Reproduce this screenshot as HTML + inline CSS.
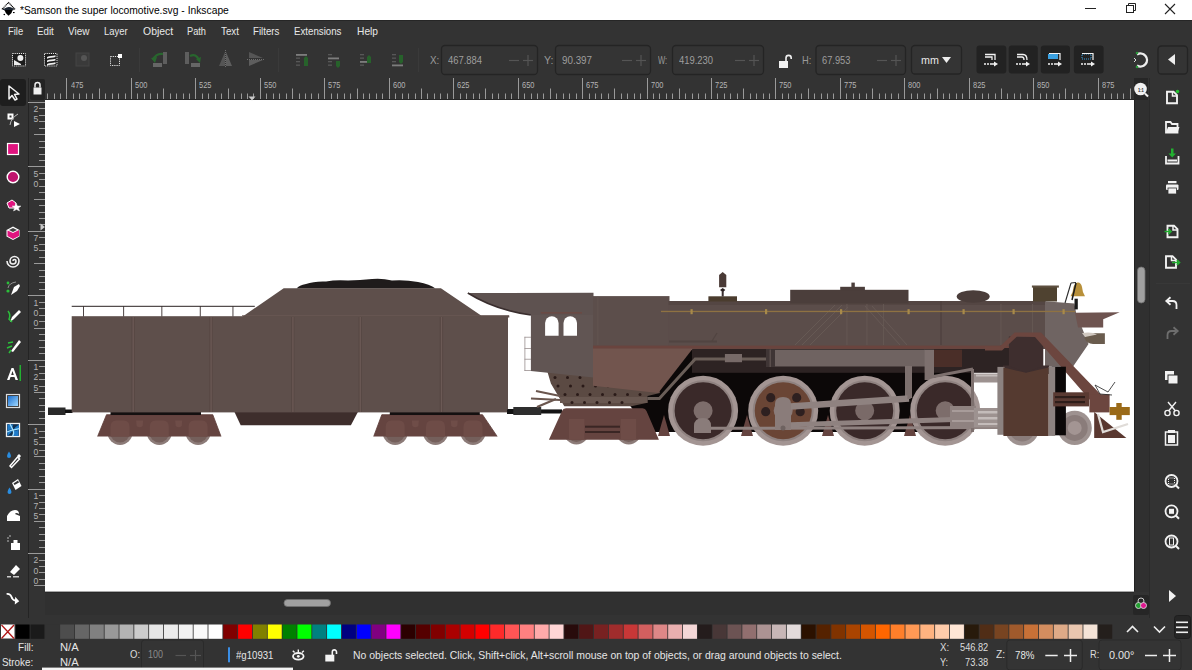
<!DOCTYPE html><html><head><meta charset="utf-8"><style>
*{margin:0;padding:0;box-sizing:border-box}
html,body{width:1192px;height:670px;overflow:hidden;background:#333333;font-family:"Liberation Sans",sans-serif;color:#e6e6e6}
.abs{position:absolute}
.t{position:absolute;white-space:nowrap;line-height:1;transform-origin:0 0}
svg{position:absolute;left:0;top:0}
</style></head><body>

<svg width="1192" height="670"><rect x="0" y="0" width="1192" height="20" fill="#fff" rx="0" /><path d="M8.5 2.5 L14.6 8.9 L8.5 11.5 L2.4 8.9Z" fill="#fff" stroke="#000" stroke-width="1.1" stroke-dasharray="1.2 0.5"/><path d="M4.5 8.5 Q8.5 5.5 12.8 8.3 L14.6 8.9 L8.5 11.5 L2.4 8.9Z" fill="#1a2430"/><path d="M4.5 10 H12.5 L11.5 13 L8.5 15.8 L5.8 13Z" fill="#000"/><circle cx="4.3" cy="14.5" r="0.8" fill="#000"/><rect x="13" y="12" width="1.6" height="1.1" fill="#000"/><line x1="1085" y1="8.5" x2="1096" y2="8.5" stroke="#222" stroke-width="1"/><rect x="1126.5" y="5.5" width="7" height="7" fill="none" stroke="#222"/><path d="M1128.5 5.5 V3.5 H1135.5 V10.5 H1133.5" fill="none" stroke="#222"/><path d="M1165 4 L1175 14 M1175 4 L1165 14" stroke="#222" stroke-width="1.1"/><rect x="0" y="20" width="1192" height="1" fill="#262626" rx="0" /><rect x="45" y="100" width="1089" height="492" fill="#fff" rx="0" /><rect x="45" y="592" width="1089" height="23" fill="#303030" rx="0" /><rect x="45" y="591.6" width="1089" height="1" fill="#242424" rx="0" /><rect x="1134" y="78" width="14" height="22" fill="#262626" rx="0" /><rect x="28" y="78" width="1" height="540" fill="#242424" rx="0" /><rect x="1134" y="100" width="15" height="492" fill="#303030" rx="0" /><rect x="1149" y="78" width="1" height="540" fill="#2a2a2a" rx="0" /><rect x="1134" y="100" width="1" height="491" fill="#222" rx="0" /><rect x="0" y="79" width="26" height="27" fill="#1e1e1e" rx="3" /><rect x="30" y="79" width="15" height="21" fill="#232323" rx="2" /><rect x="33.5" y="87.5" width="8" height="7" fill="#eee"/><path d="M35 87.5 V85 a2.5 2.5 0 0 1 5 0 V87.5" fill="none" stroke="#eee" stroke-width="1.5"/><line x1="47.5" y1="93.5" x2="47.5" y2="100" stroke="#9a9a9a" stroke-width="1"/><line x1="54.5" y1="93.5" x2="54.5" y2="100" stroke="#9a9a9a" stroke-width="1"/><line x1="60.5" y1="93.5" x2="60.5" y2="100" stroke="#9a9a9a" stroke-width="1"/><line x1="66.5" y1="78" x2="66.5" y2="100" stroke="#9a9a9a" stroke-width="1"/><line x1="73.5" y1="93.5" x2="73.5" y2="100" stroke="#9a9a9a" stroke-width="1"/><line x1="79.5" y1="93.5" x2="79.5" y2="100" stroke="#9a9a9a" stroke-width="1"/><line x1="86.5" y1="93.5" x2="86.5" y2="100" stroke="#9a9a9a" stroke-width="1"/><line x1="92.5" y1="93.5" x2="92.5" y2="100" stroke="#9a9a9a" stroke-width="1"/><line x1="99.5" y1="88.5" x2="99.5" y2="100" stroke="#9a9a9a" stroke-width="1"/><line x1="105.5" y1="93.5" x2="105.5" y2="100" stroke="#9a9a9a" stroke-width="1"/><line x1="112.5" y1="93.5" x2="112.5" y2="100" stroke="#9a9a9a" stroke-width="1"/><line x1="118.5" y1="93.5" x2="118.5" y2="100" stroke="#9a9a9a" stroke-width="1"/><line x1="125.5" y1="93.5" x2="125.5" y2="100" stroke="#9a9a9a" stroke-width="1"/><line x1="131.5" y1="78" x2="131.5" y2="100" stroke="#9a9a9a" stroke-width="1"/><line x1="137.5" y1="93.5" x2="137.5" y2="100" stroke="#9a9a9a" stroke-width="1"/><line x1="144.5" y1="93.5" x2="144.5" y2="100" stroke="#9a9a9a" stroke-width="1"/><line x1="150.5" y1="93.5" x2="150.5" y2="100" stroke="#9a9a9a" stroke-width="1"/><line x1="157.5" y1="93.5" x2="157.5" y2="100" stroke="#9a9a9a" stroke-width="1"/><line x1="163.5" y1="88.5" x2="163.5" y2="100" stroke="#9a9a9a" stroke-width="1"/><line x1="170.5" y1="93.5" x2="170.5" y2="100" stroke="#9a9a9a" stroke-width="1"/><line x1="176.5" y1="93.5" x2="176.5" y2="100" stroke="#9a9a9a" stroke-width="1"/><line x1="183.5" y1="93.5" x2="183.5" y2="100" stroke="#9a9a9a" stroke-width="1"/><line x1="189.5" y1="93.5" x2="189.5" y2="100" stroke="#9a9a9a" stroke-width="1"/><line x1="195.5" y1="78" x2="195.5" y2="100" stroke="#9a9a9a" stroke-width="1"/><line x1="202.5" y1="93.5" x2="202.5" y2="100" stroke="#9a9a9a" stroke-width="1"/><line x1="208.5" y1="93.5" x2="208.5" y2="100" stroke="#9a9a9a" stroke-width="1"/><line x1="215.5" y1="93.5" x2="215.5" y2="100" stroke="#9a9a9a" stroke-width="1"/><line x1="221.5" y1="93.5" x2="221.5" y2="100" stroke="#9a9a9a" stroke-width="1"/><line x1="228.5" y1="88.5" x2="228.5" y2="100" stroke="#9a9a9a" stroke-width="1"/><line x1="234.5" y1="93.5" x2="234.5" y2="100" stroke="#9a9a9a" stroke-width="1"/><line x1="241.5" y1="93.5" x2="241.5" y2="100" stroke="#9a9a9a" stroke-width="1"/><line x1="247.5" y1="93.5" x2="247.5" y2="100" stroke="#9a9a9a" stroke-width="1"/><line x1="253.5" y1="93.5" x2="253.5" y2="100" stroke="#9a9a9a" stroke-width="1"/><line x1="260.5" y1="78" x2="260.5" y2="100" stroke="#9a9a9a" stroke-width="1"/><line x1="266.5" y1="93.5" x2="266.5" y2="100" stroke="#9a9a9a" stroke-width="1"/><line x1="273.5" y1="93.5" x2="273.5" y2="100" stroke="#9a9a9a" stroke-width="1"/><line x1="279.5" y1="93.5" x2="279.5" y2="100" stroke="#9a9a9a" stroke-width="1"/><line x1="286.5" y1="93.5" x2="286.5" y2="100" stroke="#9a9a9a" stroke-width="1"/><line x1="292.5" y1="88.5" x2="292.5" y2="100" stroke="#9a9a9a" stroke-width="1"/><line x1="299.5" y1="93.5" x2="299.5" y2="100" stroke="#9a9a9a" stroke-width="1"/><line x1="305.5" y1="93.5" x2="305.5" y2="100" stroke="#9a9a9a" stroke-width="1"/><line x1="311.5" y1="93.5" x2="311.5" y2="100" stroke="#9a9a9a" stroke-width="1"/><line x1="318.5" y1="93.5" x2="318.5" y2="100" stroke="#9a9a9a" stroke-width="1"/><line x1="324.5" y1="78" x2="324.5" y2="100" stroke="#9a9a9a" stroke-width="1"/><line x1="331.5" y1="93.5" x2="331.5" y2="100" stroke="#9a9a9a" stroke-width="1"/><line x1="337.5" y1="93.5" x2="337.5" y2="100" stroke="#9a9a9a" stroke-width="1"/><line x1="344.5" y1="93.5" x2="344.5" y2="100" stroke="#9a9a9a" stroke-width="1"/><line x1="350.5" y1="93.5" x2="350.5" y2="100" stroke="#9a9a9a" stroke-width="1"/><line x1="357.5" y1="88.5" x2="357.5" y2="100" stroke="#9a9a9a" stroke-width="1"/><line x1="363.5" y1="93.5" x2="363.5" y2="100" stroke="#9a9a9a" stroke-width="1"/><line x1="369.5" y1="93.5" x2="369.5" y2="100" stroke="#9a9a9a" stroke-width="1"/><line x1="376.5" y1="93.5" x2="376.5" y2="100" stroke="#9a9a9a" stroke-width="1"/><line x1="382.5" y1="93.5" x2="382.5" y2="100" stroke="#9a9a9a" stroke-width="1"/><line x1="389.5" y1="78" x2="389.5" y2="100" stroke="#9a9a9a" stroke-width="1"/><line x1="395.5" y1="93.5" x2="395.5" y2="100" stroke="#9a9a9a" stroke-width="1"/><line x1="402.5" y1="93.5" x2="402.5" y2="100" stroke="#9a9a9a" stroke-width="1"/><line x1="408.5" y1="93.5" x2="408.5" y2="100" stroke="#9a9a9a" stroke-width="1"/><line x1="415.5" y1="93.5" x2="415.5" y2="100" stroke="#9a9a9a" stroke-width="1"/><line x1="421.5" y1="88.5" x2="421.5" y2="100" stroke="#9a9a9a" stroke-width="1"/><line x1="427.5" y1="93.5" x2="427.5" y2="100" stroke="#9a9a9a" stroke-width="1"/><line x1="434.5" y1="93.5" x2="434.5" y2="100" stroke="#9a9a9a" stroke-width="1"/><line x1="440.5" y1="93.5" x2="440.5" y2="100" stroke="#9a9a9a" stroke-width="1"/><line x1="447.5" y1="93.5" x2="447.5" y2="100" stroke="#9a9a9a" stroke-width="1"/><line x1="453.5" y1="78" x2="453.5" y2="100" stroke="#9a9a9a" stroke-width="1"/><line x1="460.5" y1="93.5" x2="460.5" y2="100" stroke="#9a9a9a" stroke-width="1"/><line x1="466.5" y1="93.5" x2="466.5" y2="100" stroke="#9a9a9a" stroke-width="1"/><line x1="473.5" y1="93.5" x2="473.5" y2="100" stroke="#9a9a9a" stroke-width="1"/><line x1="479.5" y1="93.5" x2="479.5" y2="100" stroke="#9a9a9a" stroke-width="1"/><line x1="485.5" y1="88.5" x2="485.5" y2="100" stroke="#9a9a9a" stroke-width="1"/><line x1="492.5" y1="93.5" x2="492.5" y2="100" stroke="#9a9a9a" stroke-width="1"/><line x1="498.5" y1="93.5" x2="498.5" y2="100" stroke="#9a9a9a" stroke-width="1"/><line x1="505.5" y1="93.5" x2="505.5" y2="100" stroke="#9a9a9a" stroke-width="1"/><line x1="511.5" y1="93.5" x2="511.5" y2="100" stroke="#9a9a9a" stroke-width="1"/><line x1="518.5" y1="78" x2="518.5" y2="100" stroke="#9a9a9a" stroke-width="1"/><line x1="524.5" y1="93.5" x2="524.5" y2="100" stroke="#9a9a9a" stroke-width="1"/><line x1="531.5" y1="93.5" x2="531.5" y2="100" stroke="#9a9a9a" stroke-width="1"/><line x1="537.5" y1="93.5" x2="537.5" y2="100" stroke="#9a9a9a" stroke-width="1"/><line x1="543.5" y1="93.5" x2="543.5" y2="100" stroke="#9a9a9a" stroke-width="1"/><line x1="550.5" y1="88.5" x2="550.5" y2="100" stroke="#9a9a9a" stroke-width="1"/><line x1="556.5" y1="93.5" x2="556.5" y2="100" stroke="#9a9a9a" stroke-width="1"/><line x1="563.5" y1="93.5" x2="563.5" y2="100" stroke="#9a9a9a" stroke-width="1"/><line x1="569.5" y1="93.5" x2="569.5" y2="100" stroke="#9a9a9a" stroke-width="1"/><line x1="576.5" y1="93.5" x2="576.5" y2="100" stroke="#9a9a9a" stroke-width="1"/><line x1="582.5" y1="78" x2="582.5" y2="100" stroke="#9a9a9a" stroke-width="1"/><line x1="589.5" y1="93.5" x2="589.5" y2="100" stroke="#9a9a9a" stroke-width="1"/><line x1="595.5" y1="93.5" x2="595.5" y2="100" stroke="#9a9a9a" stroke-width="1"/><line x1="601.5" y1="93.5" x2="601.5" y2="100" stroke="#9a9a9a" stroke-width="1"/><line x1="608.5" y1="93.5" x2="608.5" y2="100" stroke="#9a9a9a" stroke-width="1"/><line x1="614.5" y1="88.5" x2="614.5" y2="100" stroke="#9a9a9a" stroke-width="1"/><line x1="621.5" y1="93.5" x2="621.5" y2="100" stroke="#9a9a9a" stroke-width="1"/><line x1="627.5" y1="93.5" x2="627.5" y2="100" stroke="#9a9a9a" stroke-width="1"/><line x1="634.5" y1="93.5" x2="634.5" y2="100" stroke="#9a9a9a" stroke-width="1"/><line x1="640.5" y1="93.5" x2="640.5" y2="100" stroke="#9a9a9a" stroke-width="1"/><line x1="647.5" y1="78" x2="647.5" y2="100" stroke="#9a9a9a" stroke-width="1"/><line x1="653.5" y1="93.5" x2="653.5" y2="100" stroke="#9a9a9a" stroke-width="1"/><line x1="659.5" y1="93.5" x2="659.5" y2="100" stroke="#9a9a9a" stroke-width="1"/><line x1="666.5" y1="93.5" x2="666.5" y2="100" stroke="#9a9a9a" stroke-width="1"/><line x1="672.5" y1="93.5" x2="672.5" y2="100" stroke="#9a9a9a" stroke-width="1"/><line x1="679.5" y1="88.5" x2="679.5" y2="100" stroke="#9a9a9a" stroke-width="1"/><line x1="685.5" y1="93.5" x2="685.5" y2="100" stroke="#9a9a9a" stroke-width="1"/><line x1="692.5" y1="93.5" x2="692.5" y2="100" stroke="#9a9a9a" stroke-width="1"/><line x1="698.5" y1="93.5" x2="698.5" y2="100" stroke="#9a9a9a" stroke-width="1"/><line x1="705.5" y1="93.5" x2="705.5" y2="100" stroke="#9a9a9a" stroke-width="1"/><line x1="711.5" y1="78" x2="711.5" y2="100" stroke="#9a9a9a" stroke-width="1"/><line x1="717.5" y1="93.5" x2="717.5" y2="100" stroke="#9a9a9a" stroke-width="1"/><line x1="724.5" y1="93.5" x2="724.5" y2="100" stroke="#9a9a9a" stroke-width="1"/><line x1="730.5" y1="93.5" x2="730.5" y2="100" stroke="#9a9a9a" stroke-width="1"/><line x1="737.5" y1="93.5" x2="737.5" y2="100" stroke="#9a9a9a" stroke-width="1"/><line x1="743.5" y1="88.5" x2="743.5" y2="100" stroke="#9a9a9a" stroke-width="1"/><line x1="750.5" y1="93.5" x2="750.5" y2="100" stroke="#9a9a9a" stroke-width="1"/><line x1="756.5" y1="93.5" x2="756.5" y2="100" stroke="#9a9a9a" stroke-width="1"/><line x1="763.5" y1="93.5" x2="763.5" y2="100" stroke="#9a9a9a" stroke-width="1"/><line x1="769.5" y1="93.5" x2="769.5" y2="100" stroke="#9a9a9a" stroke-width="1"/><line x1="775.5" y1="78" x2="775.5" y2="100" stroke="#9a9a9a" stroke-width="1"/><line x1="782.5" y1="93.5" x2="782.5" y2="100" stroke="#9a9a9a" stroke-width="1"/><line x1="788.5" y1="93.5" x2="788.5" y2="100" stroke="#9a9a9a" stroke-width="1"/><line x1="795.5" y1="93.5" x2="795.5" y2="100" stroke="#9a9a9a" stroke-width="1"/><line x1="801.5" y1="93.5" x2="801.5" y2="100" stroke="#9a9a9a" stroke-width="1"/><line x1="808.5" y1="88.5" x2="808.5" y2="100" stroke="#9a9a9a" stroke-width="1"/><line x1="814.5" y1="93.5" x2="814.5" y2="100" stroke="#9a9a9a" stroke-width="1"/><line x1="821.5" y1="93.5" x2="821.5" y2="100" stroke="#9a9a9a" stroke-width="1"/><line x1="827.5" y1="93.5" x2="827.5" y2="100" stroke="#9a9a9a" stroke-width="1"/><line x1="833.5" y1="93.5" x2="833.5" y2="100" stroke="#9a9a9a" stroke-width="1"/><line x1="840.5" y1="78" x2="840.5" y2="100" stroke="#9a9a9a" stroke-width="1"/><line x1="846.5" y1="93.5" x2="846.5" y2="100" stroke="#9a9a9a" stroke-width="1"/><line x1="853.5" y1="93.5" x2="853.5" y2="100" stroke="#9a9a9a" stroke-width="1"/><line x1="859.5" y1="93.5" x2="859.5" y2="100" stroke="#9a9a9a" stroke-width="1"/><line x1="866.5" y1="93.5" x2="866.5" y2="100" stroke="#9a9a9a" stroke-width="1"/><line x1="872.5" y1="88.5" x2="872.5" y2="100" stroke="#9a9a9a" stroke-width="1"/><line x1="879.5" y1="93.5" x2="879.5" y2="100" stroke="#9a9a9a" stroke-width="1"/><line x1="885.5" y1="93.5" x2="885.5" y2="100" stroke="#9a9a9a" stroke-width="1"/><line x1="891.5" y1="93.5" x2="891.5" y2="100" stroke="#9a9a9a" stroke-width="1"/><line x1="898.5" y1="93.5" x2="898.5" y2="100" stroke="#9a9a9a" stroke-width="1"/><line x1="904.5" y1="78" x2="904.5" y2="100" stroke="#9a9a9a" stroke-width="1"/><line x1="911.5" y1="93.5" x2="911.5" y2="100" stroke="#9a9a9a" stroke-width="1"/><line x1="917.5" y1="93.5" x2="917.5" y2="100" stroke="#9a9a9a" stroke-width="1"/><line x1="924.5" y1="93.5" x2="924.5" y2="100" stroke="#9a9a9a" stroke-width="1"/><line x1="930.5" y1="93.5" x2="930.5" y2="100" stroke="#9a9a9a" stroke-width="1"/><line x1="937.5" y1="88.5" x2="937.5" y2="100" stroke="#9a9a9a" stroke-width="1"/><line x1="943.5" y1="93.5" x2="943.5" y2="100" stroke="#9a9a9a" stroke-width="1"/><line x1="949.5" y1="93.5" x2="949.5" y2="100" stroke="#9a9a9a" stroke-width="1"/><line x1="956.5" y1="93.5" x2="956.5" y2="100" stroke="#9a9a9a" stroke-width="1"/><line x1="962.5" y1="93.5" x2="962.5" y2="100" stroke="#9a9a9a" stroke-width="1"/><line x1="969.5" y1="78" x2="969.5" y2="100" stroke="#9a9a9a" stroke-width="1"/><line x1="975.5" y1="93.5" x2="975.5" y2="100" stroke="#9a9a9a" stroke-width="1"/><line x1="982.5" y1="93.5" x2="982.5" y2="100" stroke="#9a9a9a" stroke-width="1"/><line x1="988.5" y1="93.5" x2="988.5" y2="100" stroke="#9a9a9a" stroke-width="1"/><line x1="995.5" y1="93.5" x2="995.5" y2="100" stroke="#9a9a9a" stroke-width="1"/><line x1="1001.5" y1="88.5" x2="1001.5" y2="100" stroke="#9a9a9a" stroke-width="1"/><line x1="1007.5" y1="93.5" x2="1007.5" y2="100" stroke="#9a9a9a" stroke-width="1"/><line x1="1014.5" y1="93.5" x2="1014.5" y2="100" stroke="#9a9a9a" stroke-width="1"/><line x1="1020.5" y1="93.5" x2="1020.5" y2="100" stroke="#9a9a9a" stroke-width="1"/><line x1="1027.5" y1="93.5" x2="1027.5" y2="100" stroke="#9a9a9a" stroke-width="1"/><line x1="1033.5" y1="78" x2="1033.5" y2="100" stroke="#9a9a9a" stroke-width="1"/><line x1="1040.5" y1="93.5" x2="1040.5" y2="100" stroke="#9a9a9a" stroke-width="1"/><line x1="1046.5" y1="93.5" x2="1046.5" y2="100" stroke="#9a9a9a" stroke-width="1"/><line x1="1053.5" y1="93.5" x2="1053.5" y2="100" stroke="#9a9a9a" stroke-width="1"/><line x1="1059.5" y1="93.5" x2="1059.5" y2="100" stroke="#9a9a9a" stroke-width="1"/><line x1="1065.5" y1="88.5" x2="1065.5" y2="100" stroke="#9a9a9a" stroke-width="1"/><line x1="1072.5" y1="93.5" x2="1072.5" y2="100" stroke="#9a9a9a" stroke-width="1"/><line x1="1078.5" y1="93.5" x2="1078.5" y2="100" stroke="#9a9a9a" stroke-width="1"/><line x1="1085.5" y1="93.5" x2="1085.5" y2="100" stroke="#9a9a9a" stroke-width="1"/><line x1="1091.5" y1="93.5" x2="1091.5" y2="100" stroke="#9a9a9a" stroke-width="1"/><line x1="1098.5" y1="78" x2="1098.5" y2="100" stroke="#9a9a9a" stroke-width="1"/><line x1="1104.5" y1="93.5" x2="1104.5" y2="100" stroke="#9a9a9a" stroke-width="1"/><line x1="1111.5" y1="93.5" x2="1111.5" y2="100" stroke="#9a9a9a" stroke-width="1"/><line x1="1117.5" y1="93.5" x2="1117.5" y2="100" stroke="#9a9a9a" stroke-width="1"/><line x1="1123.5" y1="93.5" x2="1123.5" y2="100" stroke="#9a9a9a" stroke-width="1"/><line x1="1130.5" y1="88.5" x2="1130.5" y2="100" stroke="#9a9a9a" stroke-width="1"/><line x1="28" y1="102.5" x2="45" y2="102.5" stroke="#9a9a9a" stroke-width="1"/><line x1="39" y1="108.5" x2="45" y2="108.5" stroke="#9a9a9a" stroke-width="1"/><line x1="39" y1="115.5" x2="45" y2="115.5" stroke="#9a9a9a" stroke-width="1"/><line x1="39" y1="121.5" x2="45" y2="121.5" stroke="#9a9a9a" stroke-width="1"/><line x1="39" y1="128.5" x2="45" y2="128.5" stroke="#9a9a9a" stroke-width="1"/><line x1="34" y1="134.5" x2="45" y2="134.5" stroke="#9a9a9a" stroke-width="1"/><line x1="39" y1="141.5" x2="45" y2="141.5" stroke="#9a9a9a" stroke-width="1"/><line x1="39" y1="147.5" x2="45" y2="147.5" stroke="#9a9a9a" stroke-width="1"/><line x1="39" y1="154.5" x2="45" y2="154.5" stroke="#9a9a9a" stroke-width="1"/><line x1="39" y1="160.5" x2="45" y2="160.5" stroke="#9a9a9a" stroke-width="1"/><text x="36" y="112.1" font-size="8.6" fill="#b4b4b4" text-anchor="middle" font-family="Liberation Sans">2</text><text x="36" y="122.4" font-size="8.6" fill="#b4b4b4" text-anchor="middle" font-family="Liberation Sans">5</text><line x1="28" y1="166.5" x2="45" y2="166.5" stroke="#9a9a9a" stroke-width="1"/><line x1="39" y1="173.5" x2="45" y2="173.5" stroke="#9a9a9a" stroke-width="1"/><line x1="39" y1="179.5" x2="45" y2="179.5" stroke="#9a9a9a" stroke-width="1"/><line x1="39" y1="186.5" x2="45" y2="186.5" stroke="#9a9a9a" stroke-width="1"/><line x1="39" y1="192.5" x2="45" y2="192.5" stroke="#9a9a9a" stroke-width="1"/><line x1="34" y1="199.5" x2="45" y2="199.5" stroke="#9a9a9a" stroke-width="1"/><line x1="39" y1="205.5" x2="45" y2="205.5" stroke="#9a9a9a" stroke-width="1"/><line x1="39" y1="212.5" x2="45" y2="212.5" stroke="#9a9a9a" stroke-width="1"/><line x1="39" y1="218.5" x2="45" y2="218.5" stroke="#9a9a9a" stroke-width="1"/><line x1="39" y1="224.5" x2="45" y2="224.5" stroke="#9a9a9a" stroke-width="1"/><text x="36" y="176.5" font-size="8.6" fill="#b4b4b4" text-anchor="middle" font-family="Liberation Sans">5</text><text x="36" y="186.8" font-size="8.6" fill="#b4b4b4" text-anchor="middle" font-family="Liberation Sans">0</text><line x1="28" y1="231.5" x2="45" y2="231.5" stroke="#9a9a9a" stroke-width="1"/><line x1="39" y1="237.5" x2="45" y2="237.5" stroke="#9a9a9a" stroke-width="1"/><line x1="39" y1="244.5" x2="45" y2="244.5" stroke="#9a9a9a" stroke-width="1"/><line x1="39" y1="250.5" x2="45" y2="250.5" stroke="#9a9a9a" stroke-width="1"/><line x1="39" y1="257.5" x2="45" y2="257.5" stroke="#9a9a9a" stroke-width="1"/><line x1="34" y1="263.5" x2="45" y2="263.5" stroke="#9a9a9a" stroke-width="1"/><line x1="39" y1="270.5" x2="45" y2="270.5" stroke="#9a9a9a" stroke-width="1"/><line x1="39" y1="276.5" x2="45" y2="276.5" stroke="#9a9a9a" stroke-width="1"/><line x1="39" y1="282.5" x2="45" y2="282.5" stroke="#9a9a9a" stroke-width="1"/><line x1="39" y1="289.5" x2="45" y2="289.5" stroke="#9a9a9a" stroke-width="1"/><text x="36" y="241.0" font-size="8.6" fill="#b4b4b4" text-anchor="middle" font-family="Liberation Sans">7</text><text x="36" y="251.3" font-size="8.6" fill="#b4b4b4" text-anchor="middle" font-family="Liberation Sans">5</text><line x1="28" y1="295.5" x2="45" y2="295.5" stroke="#9a9a9a" stroke-width="1"/><line x1="39" y1="302.5" x2="45" y2="302.5" stroke="#9a9a9a" stroke-width="1"/><line x1="39" y1="308.5" x2="45" y2="308.5" stroke="#9a9a9a" stroke-width="1"/><line x1="39" y1="315.5" x2="45" y2="315.5" stroke="#9a9a9a" stroke-width="1"/><line x1="39" y1="321.5" x2="45" y2="321.5" stroke="#9a9a9a" stroke-width="1"/><line x1="34" y1="328.5" x2="45" y2="328.5" stroke="#9a9a9a" stroke-width="1"/><line x1="39" y1="334.5" x2="45" y2="334.5" stroke="#9a9a9a" stroke-width="1"/><line x1="39" y1="340.5" x2="45" y2="340.5" stroke="#9a9a9a" stroke-width="1"/><line x1="39" y1="347.5" x2="45" y2="347.5" stroke="#9a9a9a" stroke-width="1"/><line x1="39" y1="353.5" x2="45" y2="353.5" stroke="#9a9a9a" stroke-width="1"/><text x="36" y="305.5" font-size="8.6" fill="#b4b4b4" text-anchor="middle" font-family="Liberation Sans">1</text><text x="36" y="315.8" font-size="8.6" fill="#b4b4b4" text-anchor="middle" font-family="Liberation Sans">0</text><text x="36" y="326.1" font-size="8.6" fill="#b4b4b4" text-anchor="middle" font-family="Liberation Sans">0</text><line x1="28" y1="360.5" x2="45" y2="360.5" stroke="#9a9a9a" stroke-width="1"/><line x1="39" y1="366.5" x2="45" y2="366.5" stroke="#9a9a9a" stroke-width="1"/><line x1="39" y1="373.5" x2="45" y2="373.5" stroke="#9a9a9a" stroke-width="1"/><line x1="39" y1="379.5" x2="45" y2="379.5" stroke="#9a9a9a" stroke-width="1"/><line x1="39" y1="386.5" x2="45" y2="386.5" stroke="#9a9a9a" stroke-width="1"/><line x1="34" y1="392.5" x2="45" y2="392.5" stroke="#9a9a9a" stroke-width="1"/><line x1="39" y1="398.5" x2="45" y2="398.5" stroke="#9a9a9a" stroke-width="1"/><line x1="39" y1="405.5" x2="45" y2="405.5" stroke="#9a9a9a" stroke-width="1"/><line x1="39" y1="411.5" x2="45" y2="411.5" stroke="#9a9a9a" stroke-width="1"/><line x1="39" y1="418.5" x2="45" y2="418.5" stroke="#9a9a9a" stroke-width="1"/><text x="36" y="369.9" font-size="8.6" fill="#b4b4b4" text-anchor="middle" font-family="Liberation Sans">1</text><text x="36" y="380.2" font-size="8.6" fill="#b4b4b4" text-anchor="middle" font-family="Liberation Sans">2</text><text x="36" y="390.5" font-size="8.6" fill="#b4b4b4" text-anchor="middle" font-family="Liberation Sans">5</text><line x1="28" y1="424.5" x2="45" y2="424.5" stroke="#9a9a9a" stroke-width="1"/><line x1="39" y1="431.5" x2="45" y2="431.5" stroke="#9a9a9a" stroke-width="1"/><line x1="39" y1="437.5" x2="45" y2="437.5" stroke="#9a9a9a" stroke-width="1"/><line x1="39" y1="444.5" x2="45" y2="444.5" stroke="#9a9a9a" stroke-width="1"/><line x1="39" y1="450.5" x2="45" y2="450.5" stroke="#9a9a9a" stroke-width="1"/><line x1="34" y1="456.5" x2="45" y2="456.5" stroke="#9a9a9a" stroke-width="1"/><line x1="39" y1="463.5" x2="45" y2="463.5" stroke="#9a9a9a" stroke-width="1"/><line x1="39" y1="469.5" x2="45" y2="469.5" stroke="#9a9a9a" stroke-width="1"/><line x1="39" y1="476.5" x2="45" y2="476.5" stroke="#9a9a9a" stroke-width="1"/><line x1="39" y1="482.5" x2="45" y2="482.5" stroke="#9a9a9a" stroke-width="1"/><text x="36" y="434.4" font-size="8.6" fill="#b4b4b4" text-anchor="middle" font-family="Liberation Sans">1</text><text x="36" y="444.7" font-size="8.6" fill="#b4b4b4" text-anchor="middle" font-family="Liberation Sans">5</text><text x="36" y="455.0" font-size="8.6" fill="#b4b4b4" text-anchor="middle" font-family="Liberation Sans">0</text><line x1="28" y1="489.5" x2="45" y2="489.5" stroke="#9a9a9a" stroke-width="1"/><line x1="39" y1="495.5" x2="45" y2="495.5" stroke="#9a9a9a" stroke-width="1"/><line x1="39" y1="502.5" x2="45" y2="502.5" stroke="#9a9a9a" stroke-width="1"/><line x1="39" y1="508.5" x2="45" y2="508.5" stroke="#9a9a9a" stroke-width="1"/><line x1="39" y1="514.5" x2="45" y2="514.5" stroke="#9a9a9a" stroke-width="1"/><line x1="34" y1="521.5" x2="45" y2="521.5" stroke="#9a9a9a" stroke-width="1"/><line x1="39" y1="527.5" x2="45" y2="527.5" stroke="#9a9a9a" stroke-width="1"/><line x1="39" y1="534.5" x2="45" y2="534.5" stroke="#9a9a9a" stroke-width="1"/><line x1="39" y1="540.5" x2="45" y2="540.5" stroke="#9a9a9a" stroke-width="1"/><line x1="39" y1="547.5" x2="45" y2="547.5" stroke="#9a9a9a" stroke-width="1"/><text x="36" y="498.8" font-size="8.6" fill="#b4b4b4" text-anchor="middle" font-family="Liberation Sans">1</text><text x="36" y="509.1" font-size="8.6" fill="#b4b4b4" text-anchor="middle" font-family="Liberation Sans">7</text><text x="36" y="519.4" font-size="8.6" fill="#b4b4b4" text-anchor="middle" font-family="Liberation Sans">5</text><line x1="28" y1="553.5" x2="45" y2="553.5" stroke="#9a9a9a" stroke-width="1"/><line x1="39" y1="560.5" x2="45" y2="560.5" stroke="#9a9a9a" stroke-width="1"/><line x1="39" y1="566.5" x2="45" y2="566.5" stroke="#9a9a9a" stroke-width="1"/><line x1="39" y1="572.5" x2="45" y2="572.5" stroke="#9a9a9a" stroke-width="1"/><line x1="39" y1="579.5" x2="45" y2="579.5" stroke="#9a9a9a" stroke-width="1"/><line x1="34" y1="585.5" x2="45" y2="585.5" stroke="#9a9a9a" stroke-width="1"/><text x="36" y="563.3" font-size="8.6" fill="#b4b4b4" text-anchor="middle" font-family="Liberation Sans">2</text><text x="36" y="573.6" font-size="8.6" fill="#b4b4b4" text-anchor="middle" font-family="Liberation Sans">0</text><text x="36" y="583.9" font-size="8.6" fill="#b4b4b4" text-anchor="middle" font-family="Liberation Sans">0</text><rect x="45" y="99" width="1089" height="1" fill="#262626" rx="0" /><path d="M248.5 96.5 H255.5 L252 100.5Z" fill="#c8c8c8"/><path d="M40.5 223.5 V230.5 L45 227Z" fill="#c8c8c8"/><rect x="12" y="53" width="14" height="13.5" fill="#1c1c1c"/><rect x="12.5" y="53.5" width="13" height="12.5" fill="none" stroke="#e8e8e8" stroke-width="1" stroke-dasharray="1.2 0.9"/><circle cx="20.4" cy="58" r="3" fill="#eee"/><path d="M14 65 V60 L17.5 62 L21 64 V65 Z" fill="#eee"/><rect x="44" y="53" width="13.5" height="13.5" fill="#1c1c1c"/><rect x="44.5" y="53.5" width="12.5" height="12.5" fill="none" stroke="#e8e8e8" stroke-width="1" stroke-dasharray="1.2 0.9"/><path d="M47 57.0 C49.5 55.5, 52.5 56.3, 55.5 55.2 V57.0 C53 58.1, 49.5 57.3, 47 58.7Z" fill="#eee"/><path d="M47 60.5 C49.5 59, 52.5 59.8, 55.5 58.7 V60.5 C53 61.6, 49.5 60.8, 47 62.2Z" fill="#eee"/><path d="M47 64.0 C49.5 62.5, 52.5 63.3, 55.5 62.2 V64.0 C53 65.1, 49.5 64.3, 47 65.7Z" fill="#eee"/><rect x="76" y="53" width="13" height="13" fill="#3a3a3a" stroke="#444"/><circle cx="84" cy="58" r="3" fill="#555"/><rect x="110.5" y="56.5" width="9" height="9" fill="none" stroke="#e8e8e8" stroke-dasharray="1.2 1"/><rect x="118" y="54" width="4" height="4" fill="#fff" rx="0" /><g opacity="0.5"><path d="M153 60 Q156 53 163 54" fill="none" stroke="#1f9a2a" stroke-width="2.2"/><path d="M151 58 L155 63 L157 57Z" fill="#1f9a2a"/><rect x="153" y="63" width="9" height="4" fill="#9a9a9a" rx="0" /><rect x="163" y="52" width="4" height="12" fill="#8a8a8a" rx="0" /><rect x="185" y="52" width="4" height="12" fill="#8a8a8a" rx="0" /><rect x="191" y="63" width="9" height="4" fill="#9a9a9a" rx="0" /><path d="M190 56 Q196 53 199 60" fill="none" stroke="#1f9a2a" stroke-width="2.2"/><path d="M196 59 L201 57 L200 63Z" fill="#1f9a2a"/><path d="M219 66 L225 52 V66Z" fill="#777"/><path d="M226 52 L232 66 H226Z" fill="#8a8a8a"/><line x1="225.5" y1="50" x2="225.5" y2="68" stroke="#aaa" stroke-dasharray="1 1"/><path d="M249 52 L263 58 H249Z" fill="#777"/><path d="M249 60 H263 L249 66Z" fill="#8a8a8a"/><line x1="247" y1="59.5" x2="265" y2="59.5" stroke="#aaa" stroke-dasharray="1 1"/></g><rect x="139" y="48" width="1" height="24" fill="#3a3a3a" rx="0" /><rect x="278" y="48" width="1" height="24" fill="#3a3a3a" rx="0" /><rect x="418" y="48" width="1" height="24" fill="#3a3a3a" rx="0" /><g opacity="0.55"><rect x="296" y="54" width="11" height="1.8" fill="#bbb" rx="0" /><rect x="296" y="57.5" width="4" height="1.3" fill="#777" rx="0" /><rect x="296" y="61" width="4" height="1.3" fill="#777" rx="0" /><rect x="296" y="64.5" width="4" height="1.3" fill="#777" rx="0" /><path d="M304 58 L306 56 L308 58 V66 H304Z" fill="#1f8a25"/><rect x="328" y="54" width="4" height="1.3" fill="#777" rx="0" /><rect x="328" y="57.5" width="11" height="1.8" fill="#bbb" rx="0" /><rect x="328" y="61" width="4" height="1.3" fill="#777" rx="0" /><rect x="328" y="64.5" width="4" height="1.3" fill="#777" rx="0" /><path d="M336 61 V66 L338 68 L340 66 V61Z" fill="#1f8a25"/><rect x="360" y="54" width="4" height="1.3" fill="#777" rx="0" /><rect x="360" y="57.5" width="4" height="1.3" fill="#777" rx="0" /><rect x="360" y="61" width="11" height="1.8" fill="#bbb" rx="0" /><rect x="360" y="64.5" width="4" height="1.3" fill="#777" rx="0" /><path d="M367 57 L369 55 L371 57 V63 H367Z" fill="#1f8a25"/><rect x="392" y="54" width="4" height="1.3" fill="#777" rx="0" /><rect x="392" y="57.5" width="4" height="1.3" fill="#777" rx="0" /><rect x="392" y="61" width="4" height="1.3" fill="#777" rx="0" /><rect x="392" y="64.5" width="11" height="1.8" fill="#bbb" rx="0" /><path d="M399 55 V62 L401 64 L403 62 V55Z" fill="#1f8a25"/></g><rect x="441.5" y="45.5" width="96" height="29" rx="3.5" fill="#343434" stroke="#242424" stroke-width="1.3"/><line x1="509" y1="60.5" x2="519" y2="60.5" stroke="#555" stroke-width="1.2"/><line x1="523" y1="60.5" x2="533" y2="60.5" stroke="#555" stroke-width="1.2"/><line x1="528" y1="55" x2="528" y2="66" stroke="#555" stroke-width="1.2"/><rect x="555.5" y="45.5" width="95" height="29" rx="3.5" fill="#343434" stroke="#242424" stroke-width="1.3"/><line x1="622" y1="60.5" x2="632" y2="60.5" stroke="#555" stroke-width="1.2"/><line x1="636" y1="60.5" x2="646" y2="60.5" stroke="#555" stroke-width="1.2"/><line x1="641" y1="55" x2="641" y2="66" stroke="#555" stroke-width="1.2"/><rect x="672.5" y="45.5" width="91" height="29" rx="3.5" fill="#343434" stroke="#242424" stroke-width="1.3"/><line x1="735" y1="60.5" x2="745" y2="60.5" stroke="#555" stroke-width="1.2"/><line x1="749" y1="60.5" x2="759" y2="60.5" stroke="#555" stroke-width="1.2"/><line x1="754" y1="55" x2="754" y2="66" stroke="#555" stroke-width="1.2"/><rect x="816.0" y="45.5" width="89.5" height="29" rx="3.5" fill="#343434" stroke="#242424" stroke-width="1.3"/><line x1="877" y1="60.5" x2="887" y2="60.5" stroke="#555" stroke-width="1.2"/><line x1="891" y1="60.5" x2="901" y2="60.5" stroke="#555" stroke-width="1.2"/><line x1="896" y1="55" x2="896" y2="66" stroke="#555" stroke-width="1.2"/><rect x="779" y="61" width="9" height="7" fill="#f0f0f0"/><path d="M786 61 V58 a2.6 2.6 0 0 1 5.2 0 V59" fill="none" stroke="#f0f0f0" stroke-width="1.6"/><rect x="911.5" y="45.5" width="50" height="28.5" rx="3.5" fill="#343434" stroke="#242424" stroke-width="1.3"/><path d="M942 57 H951 L946.5 63Z" fill="#eee"/><rect x="976.5" y="45.4" width="29.799999999999955" height="28.1" fill="#222" rx="3" /><rect x="1008.7" y="45.4" width="29.09999999999991" height="28.1" fill="#222" rx="3" /><rect x="1040.8" y="45.4" width="29.200000000000045" height="28.1" fill="#222" rx="3" /><rect x="1073.9" y="45.4" width="29.699999999999818" height="28.1" fill="#222" rx="3" /><path d="M985 54.5 H995 V60 M985 57 H992 V60" fill="none" stroke="#f2f2f2" stroke-width="1.3"/><path d="M984 64 h2 M987 64 h2 M990 64 h5" stroke="#f2f2f2" stroke-width="1.6"/><path d="M994 61.5 L998 64 L994 66.5Z" fill="#f2f2f2"/><path d="M1017 54.5 H1023 Q1027 54.5 1027 60 M1017 57 H1022 Q1024 57 1024 60" fill="none" stroke="#f2f2f2" stroke-width="1.3"/><path d="M1016 64 h2 M1019 64 h2 M1022 64 h5" stroke="#f2f2f2" stroke-width="1.6"/><path d="M1026 61.5 L1030 64 L1026 66.5Z" fill="#f2f2f2"/><rect x="1048" y="54" width="10" height="5" fill="#3aa0e0"/><path d="M1049 53.5 H1060 V60" fill="none" stroke="#f2f2f2" stroke-width="1.2"/><path d="M1048 64 h2 M1051 64 h2 M1054 64 h5" stroke="#f2f2f2" stroke-width="1.6"/><path d="M1058 61.5 L1062 64 L1058 66.5Z" fill="#f2f2f2"/><rect x="1082" y="54" width="9" height="5" fill="none" stroke="#3aa0e0" stroke-dasharray="1 1"/><path d="M1082 53.5 H1093 V60" fill="none" stroke="#f2f2f2" stroke-width="1.2"/><path d="M1081 64 h2 M1084 64 h2 M1087 64 h5" stroke="#f2f2f2" stroke-width="1.6"/><path d="M1091 61.5 L1095 64 L1091 66.5Z" fill="#f2f2f2"/><path d="M1137 54.5 A6.5 6.5 0 1 1 1137 65.5" fill="none" stroke="#eee" stroke-width="2.4"/><circle cx="1137" cy="53" r="1.3" fill="#2a9a3a"/><circle cx="1137" cy="67" r="1.3" fill="#2a9a3a"/><path d="M1134 58 l2 2 -2 2" fill="none" stroke="#ddd" stroke-width="1"/><rect x="1158" y="46" width="29.5" height="28" rx="3.5" fill="#343434" stroke="#242424" stroke-width="1.3"/><path d="M1175 54 V65 L1168 59.5Z" fill="#eee"/><circle cx="1140.5" cy="89" r="6.3" fill="#f0f0f0"/><line x1="1145" y1="93.5" x2="1148" y2="96.5" stroke="#f0f0f0" stroke-width="2"/><path d="M9 86 L9 99 L12 95.5 L15 100 L17 99 L14.5 94.5 L19 94 Z" fill="none" stroke="#f4f4f4" stroke-width="1.5" stroke-linejoin="round"/><rect x="8" y="114" width="5" height="5" fill="#fff" stroke="#fff"/><rect x="9.5" y="115.5" width="2" height="2" fill="#333"/><path d="M10 125 Q11 118 18 114" fill="none" stroke="#bbb" stroke-width="1"/><path d="M14 121 L20 124 L14 127Z" fill="#fff"/><rect x="7.5" y="143.5" width="11" height="11" fill="#e0147f" stroke="#fff" stroke-width="1.2"/><circle cx="13" cy="177" r="5.8" fill="#c0136e" stroke="#fff" stroke-width="1.4"/><path d="M7 203 L12 200 L16 203 L15 208 L9 208Z" fill="#e0147f" stroke="#fff" stroke-width="1"/><path d="M16 203 L17.5 206 L21 206 L18.5 208 L19.5 211 L16.5 209.5 L13.5 211 L14.5 208 L12 206 L15 206Z" fill="#fff" stroke="#ddd" stroke-width="0.5"/><path d="M13 226.5 L19.5 230 V236.5 L13 240 L6.5 236.5 V230Z" fill="#fff"/><path d="M13 233 L19 230 V236 L13 239Z" fill="#e0147f"/><path d="M7.5 230.5 L13 233 V239 L7.5 236Z" fill="#e0147f"/><path d="M9 230 L13 228 L17 230 L13 232Z" fill="#444"/><path d="M13 261 a1.5 1.5 0 0 1 3 0 a3 3 0 0 1 -6 0 a4.5 4.5 0 0 1 9 0 a6 6 0 0 1 -12 0" fill="none" stroke="#f0f0f0" stroke-width="1.6"/><path d="M11 295 L14 287 L19 284 L20 286 L17 291 Z" fill="#fff"/><path d="M8 288 Q9 283 16 282" fill="none" stroke="#aaa" stroke-width="0.8"/><circle cx="8" cy="283" r="1.4" fill="#2bbf3a"/><circle cx="8" cy="291" r="1.6" fill="#2bbf3a"/><path d="M10 322 L12 317 L19 310 L21 312 L14 319 Z" fill="#fff"/><path d="M8 311 Q11 315 9 319 L12 322" fill="none" stroke="#2bbf3a" stroke-width="1.5"/><path d="M11 351 L19 340 L21 342 L13 352Z" fill="#fff"/><path d="M8 343 L13 342 M7 348 L12 346 M9 353 L11 350" stroke="#2bbf3a" stroke-width="1.5"/><path d="M7 380 L11.5 368 H13.5 L18 380 H15.5 L14.5 377 H10.5 L9.5 380Z M11.2 375 H13.8 L12.5 371Z" fill="#fff" fill-rule="evenodd"/><rect x="19.5" y="365" width="1.5" height="16" fill="#22b030"/><rect x="6.5" y="394.5" width="13" height="13" fill="none" stroke="#ddd" stroke-width="1.2"/><defs><linearGradient id="gg" x1="0" y1="0" x2="1" y2="1"><stop offset="0" stop-color="#1a6fd0"/><stop offset="1" stop-color="#9fd8ff"/></linearGradient></defs><rect x="8" y="396" width="10" height="10" fill="url(#gg)"/><rect x="6.5" y="423.5" width="13" height="13" fill="#0f3050" stroke="#f0f0f0" stroke-width="1.3"/><path d="M7.5 424.5 H13 Q12 428 13 430 Q9 429 7.5 431Z M19 424.5 V430 Q16 429 13 430 Q15 427 19 424.5Z M18.5 436 H13 Q14 432 13 430 Q17 431 18.5 429.5Z M7.5 436 V430.5 Q10 431.5 13 430 Q11 433 7.5 436Z" fill="#1e7ac8"/><path d="M10 424 Q12 428 13 430 Q14.5 433 12.5 436.5 M7 432 Q10 430.5 13 430 Q16 429.5 19.5 428.5" fill="none" stroke="#a8e4ff" stroke-width="1.2"/><path d="M10 466 L17.5 457 L19.5 459 L11.5 467.5Z" fill="none" stroke="#fff" stroke-width="1.5"/><path d="M17 456 L19 454 L21 456 L19.5 458Z" fill="#fff"/><path d="M9 451.5 Q11 454.5 11 456 a2 2 0 0 1 -4 0 Q7 454.5 9 451.5Z" fill="#2a8de0"/><path d="M12 483 L18 479 L21.5 486 L15.5 490Z" fill="#fff"/><path d="M13.5 483.5 L18 480.5 L19 482.5 L14.5 485Z" fill="#333"/><path d="M9.5 487.5 Q11.5 490.5 11.5 492 a2 2 0 0 1 -4 0 Q7.5 490.5 9.5 487.5Z" fill="#2a8de0"/><path d="M7 521 V516 Q10 510 15 510 Q19 510 19 514 Q16 512 15 514 L20 516 V521Z" fill="#fff"/><rect x="11" y="543" width="9" height="7" fill="#fff"/><rect x="13.5" y="540" width="4" height="3" fill="#fff"/><circle cx="8" cy="538" r="0.8" fill="#ccc"/><circle cx="10" cy="536" r="0.8" fill="#ccc"/><circle cx="8" cy="541" r="0.8" fill="#ccc"/><path d="M10 572 L16 565 L20 569 L14 575Z" fill="#fff"/><rect x="7" y="576" width="4" height="1.5" fill="#ccc"/><rect x="13" y="576" width="6" height="1.5" fill="#ccc"/><path d="M7.3 593.8 Q10.5 594 11.3 596.5 Q12.5 600.3 15.5 600.6" fill="none" stroke="#fff" stroke-width="1.8" stroke-linecap="round"/><path d="M15.2 596.8 L19.2 601.2 L14.8 604.6Z" fill="#fff"/><path d="M1167 91.7 H1173.5 L1177 95.2 V103.3 H1167Z" fill="none" stroke="#f2f2f2" stroke-width="1.9" stroke-linejoin="miter"/><path d="M1172.5 91.7 V96.0 H1177" fill="none" stroke="#f2f2f2" stroke-width="1.5"/><circle cx="1177.5" cy="91.5" r="1.8" fill="#22c030"/><path d="M1166 122 H1170.5 L1172 124 H1177.5 V132.5 H1166Z" fill="none" stroke="#f2f2f2" stroke-width="1.8"/><path d="M1168 127 H1179.5 L1177.5 132.5 H1166Z" fill="#f2f2f2"/><path d="M1166 156 V163.5 H1178.5 V156" fill="none" stroke="#f2f2f2" stroke-width="1.8"/><rect x="1167.5" y="159.5" width="9.5" height="2" fill="#f2f2f2"/><path d="M1171 148.5 H1173.5 V153.5 H1176 L1172.2 157.5 L1168.5 153.5 H1171Z" fill="#22b030"/><rect x="1168" y="181" width="8.5" height="2.2" fill="#f2f2f2"/><rect x="1166" y="184.5" width="12.5" height="5.5" rx="1" fill="#f2f2f2"/><rect x="1168" y="188" width="8.5" height="6" fill="#f2f2f2" stroke="#333" stroke-width="0.8"/><path d="M1167.5 225.7 H1174.0 L1177.5 229.2 V237.3 H1167.5Z" fill="none" stroke="#f2f2f2" stroke-width="1.9" stroke-linejoin="miter"/><path d="M1173.0 225.7 V230.0 H1177.5" fill="none" stroke="#f2f2f2" stroke-width="1.5"/><path d="M1164.5 231.5 H1171 M1168.5 229 L1171 231.5 L1168.5 234" fill="none" stroke="#22b030" stroke-width="1.7"/><path d="M1166 256.2 H1172.5 L1176 259.7 V267.8 H1166Z" fill="none" stroke="#f2f2f2" stroke-width="1.9" stroke-linejoin="miter"/><path d="M1171.5 256.2 V260.5 H1176" fill="none" stroke="#f2f2f2" stroke-width="1.5"/><path d="M1172 262.5 H1179.5 M1177 260 L1179.5 262.5 L1177 265" fill="none" stroke="#22b030" stroke-width="1.7"/><path d="M1176.5 309 V305 Q1176.5 301 1172.5 301 H1167.5" fill="none" stroke="#f2f2f2" stroke-width="1.8"/><path d="M1170.5 297.3 L1166.3 301 L1170.5 304.7" fill="none" stroke="#f2f2f2" stroke-width="1.8"/><path d="M1167.5 339 V335 Q1167.5 331 1171.5 331 H1176.5" fill="none" stroke="#6e6e6e" stroke-width="1.8"/><path d="M1173.5 327.3 L1177.7 331 L1173.5 334.7" fill="none" stroke="#6e6e6e" stroke-width="1.8"/><rect x="1156" y="283" width="34" height="1" fill="#383838" rx="0" /><rect x="1165" y="371" width="9" height="9" fill="#f2f2f2"/><rect x="1168" y="375" width="10" height="9" fill="#f2f2f2" stroke="#2e2e2e"/><circle cx="1167.5" cy="413" r="2.6" fill="none" stroke="#f2f2f2" stroke-width="1.4"/><circle cx="1176.5" cy="413" r="2.6" fill="none" stroke="#f2f2f2" stroke-width="1.4"/><path d="M1168.5 411 L1176 402 M1175.5 411 L1168 402" stroke="#f2f2f2" stroke-width="1.4"/><rect x="1165.5" y="432" width="12" height="13" fill="none" stroke="#f2f2f2" stroke-width="1.5"/><rect x="1168" y="435" width="7" height="8" fill="#f2f2f2"/><rect x="1168" y="430" width="7" height="3" fill="#f2f2f2"/><circle cx="1171.5" cy="481.0" r="6" fill="none" stroke="#f2f2f2" stroke-width="1.8"/><line x1="1175.5" y1="485.0" x2="1179" y2="488.5" stroke="#f2f2f2" stroke-width="2"/><rect x="1168.5" y="478.0" width="6" height="6" fill="none" stroke="#f2f2f2" stroke-dasharray="1 1"/><circle cx="1171.5" cy="511.3" r="6" fill="none" stroke="#f2f2f2" stroke-width="1.8"/><line x1="1175.5" y1="515.3" x2="1179" y2="518.8" stroke="#f2f2f2" stroke-width="2"/><rect x="1169" y="508.8" width="5" height="5" fill="#f2f2f2"/><circle cx="1171.5" cy="541.5" r="6" fill="none" stroke="#f2f2f2" stroke-width="1.8"/><line x1="1175.5" y1="545.5" x2="1179" y2="549" stroke="#f2f2f2" stroke-width="2"/><rect x="1169.5" y="538" width="4" height="7" fill="none" stroke="#f2f2f2"/><path d="M1169 590 V602 L1176 596Z" fill="#f2f2f2"/><rect x="1137.5" y="267" width="7.5" height="36" rx="3.7" fill="#a0a0a0" stroke="#707070" stroke-width="0.8"/><rect x="284" y="599.5" width="46.5" height="7" rx="3.5" fill="#a0a0a0" stroke="#707070" stroke-width="0.8"/><rect x="1133" y="595" width="16" height="20" fill="#262626" rx="2" /><circle cx="1141" cy="601" r="3" fill="none" stroke="#ccc" stroke-width="1"/><circle cx="1138.5" cy="605.5" r="3" fill="#22a030" stroke="#ccc" stroke-width="1"/><circle cx="1143.5" cy="605.5" r="3" fill="#e0158f" stroke="#ccc" stroke-width="1"/><rect x="1" y="624.5" width="13.5" height="14" fill="#fff"/><path d="M1.5 625 L14 638.5 M14 625 L1.5 638.5" stroke="#b01818" stroke-width="1.3"/><rect x="15.63" y="624.5" width="14" height="14.3" fill="#000000"/><rect x="30.46" y="624.5" width="14" height="14.3" fill="#1a1a1a"/><rect x="45.29" y="624.5" width="14" height="14.3" fill="#333333"/><rect x="60.12" y="624.5" width="14" height="14.3" fill="#4d4d4d"/><rect x="74.95" y="624.5" width="14" height="14.3" fill="#666666"/><rect x="89.78" y="624.5" width="14" height="14.3" fill="#808080"/><rect x="104.61" y="624.5" width="14" height="14.3" fill="#999999"/><rect x="119.44" y="624.5" width="14" height="14.3" fill="#b3b3b3"/><rect x="134.27" y="624.5" width="14" height="14.3" fill="#cccccc"/><rect x="149.10" y="624.5" width="14" height="14.3" fill="#e6e6e6"/><rect x="163.93" y="624.5" width="14" height="14.3" fill="#ececec"/><rect x="178.76" y="624.5" width="14" height="14.3" fill="#f2f2f2"/><rect x="193.59" y="624.5" width="14" height="14.3" fill="#f9f9f9"/><rect x="208.42" y="624.5" width="14" height="14.3" fill="#ffffff"/><rect x="223.25" y="624.5" width="14" height="14.3" fill="#800000"/><rect x="238.08" y="624.5" width="14" height="14.3" fill="#ff0000"/><rect x="252.91" y="624.5" width="14" height="14.3" fill="#808000"/><rect x="267.74" y="624.5" width="14" height="14.3" fill="#ffff00"/><rect x="282.57" y="624.5" width="14" height="14.3" fill="#008000"/><rect x="297.40" y="624.5" width="14" height="14.3" fill="#00ff00"/><rect x="312.23" y="624.5" width="14" height="14.3" fill="#008080"/><rect x="327.06" y="624.5" width="14" height="14.3" fill="#00ffff"/><rect x="341.89" y="624.5" width="14" height="14.3" fill="#000080"/><rect x="356.72" y="624.5" width="14" height="14.3" fill="#0000ff"/><rect x="371.55" y="624.5" width="14" height="14.3" fill="#800080"/><rect x="386.38" y="624.5" width="14" height="14.3" fill="#ff00ff"/><rect x="401.21" y="624.5" width="14" height="14.3" fill="#2b0000"/><rect x="416.04" y="624.5" width="14" height="14.3" fill="#550000"/><rect x="430.87" y="624.5" width="14" height="14.3" fill="#800000"/><rect x="445.70" y="624.5" width="14" height="14.3" fill="#aa0000"/><rect x="460.53" y="624.5" width="14" height="14.3" fill="#d40000"/><rect x="475.36" y="624.5" width="14" height="14.3" fill="#ff0000"/><rect x="490.19" y="624.5" width="14" height="14.3" fill="#ff2a2a"/><rect x="505.02" y="624.5" width="14" height="14.3" fill="#ff5555"/><rect x="519.85" y="624.5" width="14" height="14.3" fill="#ff8080"/><rect x="534.68" y="624.5" width="14" height="14.3" fill="#ffaaaa"/><rect x="549.51" y="624.5" width="14" height="14.3" fill="#ffd5d5"/><rect x="564.34" y="624.5" width="14" height="14.3" fill="#280b0b"/><rect x="579.17" y="624.5" width="14" height="14.3" fill="#501616"/><rect x="594.00" y="624.5" width="14" height="14.3" fill="#782121"/><rect x="608.83" y="624.5" width="14" height="14.3" fill="#a02c2c"/><rect x="623.66" y="624.5" width="14" height="14.3" fill="#c83737"/><rect x="638.49" y="624.5" width="14" height="14.3" fill="#d35f5f"/><rect x="653.32" y="624.5" width="14" height="14.3" fill="#de8787"/><rect x="668.15" y="624.5" width="14" height="14.3" fill="#e9afaf"/><rect x="682.98" y="624.5" width="14" height="14.3" fill="#f4d7d7"/><rect x="697.81" y="624.5" width="14" height="14.3" fill="#241c1c"/><rect x="712.64" y="624.5" width="14" height="14.3" fill="#483737"/><rect x="727.47" y="624.5" width="14" height="14.3" fill="#6c5353"/><rect x="742.30" y="624.5" width="14" height="14.3" fill="#916f6f"/><rect x="757.13" y="624.5" width="14" height="14.3" fill="#ac9393"/><rect x="771.96" y="624.5" width="14" height="14.3" fill="#c8b7b7"/><rect x="786.79" y="624.5" width="14" height="14.3" fill="#e3dbdb"/><rect x="801.62" y="624.5" width="14" height="14.3" fill="#2b1100"/><rect x="816.45" y="624.5" width="14" height="14.3" fill="#552200"/><rect x="831.28" y="624.5" width="14" height="14.3" fill="#803300"/><rect x="846.11" y="624.5" width="14" height="14.3" fill="#aa4400"/><rect x="860.94" y="624.5" width="14" height="14.3" fill="#d45500"/><rect x="875.77" y="624.5" width="14" height="14.3" fill="#ff6600"/><rect x="890.60" y="624.5" width="14" height="14.3" fill="#ff7f2a"/><rect x="905.43" y="624.5" width="14" height="14.3" fill="#ff9955"/><rect x="920.26" y="624.5" width="14" height="14.3" fill="#ffb380"/><rect x="935.09" y="624.5" width="14" height="14.3" fill="#ffccaa"/><rect x="949.92" y="624.5" width="14" height="14.3" fill="#ffe6d5"/><rect x="964.75" y="624.5" width="14" height="14.3" fill="#281a0b"/><rect x="979.58" y="624.5" width="14" height="14.3" fill="#502d16"/><rect x="994.41" y="624.5" width="14" height="14.3" fill="#784421"/><rect x="1009.24" y="624.5" width="14" height="14.3" fill="#a05a2c"/><rect x="1024.07" y="624.5" width="14" height="14.3" fill="#c87137"/><rect x="1038.90" y="624.5" width="14" height="14.3" fill="#d38d5f"/><rect x="1053.73" y="624.5" width="14" height="14.3" fill="#deaa87"/><rect x="1068.56" y="624.5" width="14" height="14.3" fill="#e9c6af"/><rect x="1083.39" y="624.5" width="14" height="14.3" fill="#f4e3d7"/><rect x="1098.22" y="624.5" width="14" height="14.3" fill="#241f1c"/><path d="M1127 632 L1132.5 626.5 L1138 632" fill="none" stroke="#eee" stroke-width="1.6"/><path d="M1154 626.5 L1159.5 632 L1165 626.5" fill="none" stroke="#eee" stroke-width="1.6"/><rect x="1174.5" y="615.5" width="16" height="23" rx="3" fill="#262626" stroke="#1e1e1e"/><rect x="1176" y="621.5" width="12" height="1.6" fill="#eee"/><rect x="1176" y="626.5" width="12" height="1.6" fill="#eee"/><rect x="1176" y="631.5" width="12" height="1.6" fill="#eee"/><rect x="141.5" y="640" width="62" height="30" rx="3" fill="#343434" stroke="#2a2a2a"/><line x1="175.5" y1="655.5" x2="186" y2="655.5" stroke="#555" stroke-width="1.2"/><line x1="190" y1="655.5" x2="201" y2="655.5" stroke="#555" stroke-width="1.2"/><line x1="195.5" y1="650" x2="195.5" y2="661" stroke="#555" stroke-width="1.2"/><rect x="228" y="647.3" width="2" height="15" fill="#3a8ee6" rx="0" /><ellipse cx="298.3" cy="656.3" rx="5.3" ry="3.3" fill="none" stroke="#f4f4f4" stroke-width="1.8"/><circle cx="298.3" cy="656.3" r="1.4" fill="#f4f4f4"/><path d="M298.3 649.5 V652.5 M292.8 650.8 L294.6 652.6 M303.8 650.8 L302 652.6" stroke="#f4f4f4" stroke-width="1.4"/><rect x="325.3" y="654.7" width="9" height="6.8" fill="#f4f4f4"/><path d="M332.3 655 V652 a2.1 2.1 0 0 1 4.2 0 V654" fill="none" stroke="#f4f4f4" stroke-width="1.6"/><rect x="1006.8" y="640" width="75.5" height="30" rx="3" fill="#343434" stroke="#2a2a2a"/><line x1="1045.3" y1="655.5" x2="1057.7" y2="655.5" stroke="#eee" stroke-width="1.5"/><line x1="1064" y1="655.5" x2="1077" y2="655.5" stroke="#eee" stroke-width="1.5"/><line x1="1070.5" y1="649" x2="1070.5" y2="662" stroke="#eee" stroke-width="1.5"/><rect x="1099" y="640" width="82" height="30" rx="3" fill="#343434" stroke="#2a2a2a"/><line x1="1145" y1="655.5" x2="1157" y2="655.5" stroke="#eee" stroke-width="1.5"/><line x1="1163" y1="655.5" x2="1176" y2="655.5" stroke="#eee" stroke-width="1.5"/><line x1="1169.5" y1="649" x2="1169.5" y2="662" stroke="#eee" stroke-width="1.5"/><rect x="42" y="667.6" width="251" height="2.4" fill="#f4f4f4" rx="0" /><circle cx="120" cy="432.5" r="12.5" fill="#8c7b78" /><circle cx="120" cy="432.5" r="10" fill="#745f5b" /><circle cx="159.3" cy="432.5" r="12.5" fill="#8c7b78" /><circle cx="159.3" cy="432.5" r="10" fill="#745f5b" /><circle cx="198.1" cy="432.5" r="12.5" fill="#8c7b78" /><circle cx="198.1" cy="432.5" r="10" fill="#745f5b" /><circle cx="395.2" cy="432.5" r="12.5" fill="#8c7b78" /><circle cx="395.2" cy="432.5" r="10" fill="#745f5b" /><circle cx="435.5" cy="432.5" r="12.5" fill="#8c7b78" /><circle cx="435.5" cy="432.5" r="10" fill="#745f5b" /><circle cx="473" cy="432.5" r="12.5" fill="#8c7b78" /><circle cx="473" cy="432.5" r="10" fill="#745f5b" /><polygon points="106.5,414.7 212.8,414.7 221,436.4 97.6,436.4" fill="#654440" /><polyline points="97.6,436.4 106.5,414.7 212.8,414.7 221,436.4" fill="none" stroke="#5a3a36" stroke-width="0.8"/><polygon points="381.8,414.7 482.5,414.7 497.2,436.4 373.7,436.4" fill="#654440" /><polyline points="373.7,436.4 381.8,414.7 482.5,414.7 497.2,436.4" fill="none" stroke="#5a3a36" stroke-width="0.8"/><path d="M110.5 436.4 V427 Q110.5 420.5 116 420.5 H124 Q129.5 420.5 129.5 427 V436.4Z" fill="#6e4c47" /><path d="M149.8 436.4 V427 Q149.8 420.5 155.3 420.5 H163.3 Q168.8 420.5 168.8 427 V436.4Z" fill="#6e4c47" /><path d="M188.6 436.4 V427 Q188.6 420.5 194.1 420.5 H202.1 Q207.6 420.5 207.6 427 V436.4Z" fill="#6e4c47" /><path d="M136.15 420.5 H143.15 L142.65 426 Q139.65 428.5 136.65 426Z" fill="#6f4d48" /><path d="M175.2 420.5 H182.2 L181.7 426 Q178.7 428.5 175.7 426Z" fill="#6f4d48" /><path d="M385.7 436.4 V427 Q385.7 420.5 391.2 420.5 H399.2 Q404.7 420.5 404.7 427 V436.4Z" fill="#6e4c47" /><path d="M426.0 436.4 V427 Q426.0 420.5 431.5 420.5 H439.5 Q445.0 420.5 445.0 427 V436.4Z" fill="#6e4c47" /><path d="M463.5 436.4 V427 Q463.5 420.5 469 420.5 H477 Q482.5 420.5 482.5 427 V436.4Z" fill="#6e4c47" /><path d="M411.85 420.5 H418.85 L418.35 426 Q415.35 428.5 412.35 426Z" fill="#6f4d48" /><path d="M450.75 420.5 H457.75 L457.25 426 Q454.25 428.5 451.25 426Z" fill="#6f4d48" /><rect x="110.5" y="411.5" width="90.50" height="3.50" fill="#141010" /><rect x="389.8" y="411.5" width="90.00" height="3.50" fill="#141010" /><polygon points="234,411 358.4,411 350.9,425.2 240.7,425.2" fill="#3e2e2c" /><rect x="48" y="407.5" width="17.50" height="7.50" fill="#2a2a2a" /><rect x="65" y="409.5" width="7.50" height="3.50" fill="#111" /><rect x="507" y="409" width="23.00" height="5.00" fill="#111" /><path d="M296.6 288.5 Q299 285 306 284 Q314 281 326 281.5 Q336 279.5 348 280.5 Q360 280 372 279 Q382 278 392 280.5 Q405 279.5 418 282 Q430 284 435.5 288.5Z" fill="#1f1b1b" /><polygon points="242,317 283.7,288.3 440.9,288.3 481.1,315.5 509.3,315.5 509.3,317.5" fill="#5e4f4b" /><rect x="71.7" y="316.2" width="436.30" height="96.20" fill="#5e4f4b" /><rect x="131.4" y="317" width="1.20" height="95.00" fill="#574844" /><rect x="133.79999999999998" y="317" width="1.00" height="95.00" fill="#574844" /><rect x="132.6" y="317" width="1.20" height="95.00" fill="#6b5955" /><rect x="209.3" y="317" width="1.20" height="95.00" fill="#574844" /><rect x="211.7" y="317" width="1.00" height="95.00" fill="#574844" /><rect x="210.5" y="317" width="1.20" height="95.00" fill="#6b5955" /><rect x="291.1" y="317" width="1.20" height="95.00" fill="#574844" /><rect x="293.5" y="317" width="1.00" height="95.00" fill="#574844" /><rect x="292.3" y="317" width="1.20" height="95.00" fill="#6b5955" /><rect x="358.5" y="317" width="1.20" height="95.00" fill="#574844" /><rect x="360.9" y="317" width="1.00" height="95.00" fill="#574844" /><rect x="359.7" y="317" width="1.20" height="95.00" fill="#6b5955" /><rect x="439.7" y="317" width="1.20" height="95.00" fill="#574844" /><rect x="442.09999999999997" y="317" width="1.00" height="95.00" fill="#574844" /><rect x="440.9" y="317" width="1.20" height="95.00" fill="#6b5955" /><rect x="242" y="315.3" width="267.00" height="0.80" fill="#6a5955" /><rect x="71.7" y="305.8" width="183.10" height="1.00" fill="#2a2222" /><rect x="83" y="306" width="0.90" height="10.50" fill="#3a3030" /><rect x="123.2" y="306" width="0.90" height="10.50" fill="#3a3030" /><rect x="161.4" y="306" width="0.90" height="10.50" fill="#3a3030" /><rect x="199.8" y="306" width="0.90" height="10.50" fill="#3a3030" /><rect x="232.5" y="306" width="0.90" height="10.50" fill="#3a3030" /><circle cx="576.4" cy="432" r="12.5" fill="#8c7b78" /><circle cx="576.4" cy="432" r="10" fill="#745f5b" /><circle cx="628.7" cy="432" r="12.5" fill="#8c7b78" /><circle cx="628.7" cy="432" r="10" fill="#745f5b" /><rect x="507" y="409.4" width="55.00" height="4.10" fill="#141414" /><rect x="513.3" y="407" width="27.90" height="8.00" fill="#2e2e2e" /><polygon points="628,403 645,396 692,349 972,349 972,432 650,432" fill="#0c0808" /><rect x="692" y="349" width="318.00" height="23.80" fill="#2d2323" /><polygon points="547.5,372 655,372 660,393.1 647.5,396 647.5,402.7 631.4,406.2 564.3,406.2 550.9,383.4" fill="#5b4a43" /><rect x="560" y="397" width="87.50" height="6.00" fill="#685750" /><circle cx="555" cy="377.5" r="1.5" fill="#2a1a18" /><circle cx="567.5" cy="377.5" r="1.5" fill="#2a1a18" /><circle cx="580.0" cy="377.5" r="1.5" fill="#2a1a18" /><circle cx="558" cy="386" r="1.5" fill="#2a1a18" /><circle cx="570.5" cy="386" r="1.5" fill="#2a1a18" /><circle cx="583.0" cy="386" r="1.5" fill="#2a1a18" /><circle cx="595.5" cy="386" r="1.5" fill="#2a1a18" /><circle cx="608.0" cy="386" r="1.5" fill="#2a1a18" /><circle cx="620.5" cy="386" r="1.5" fill="#2a1a18" /><circle cx="633.0" cy="386" r="1.5" fill="#2a1a18" /><circle cx="565" cy="394.5" r="1.5" fill="#2a1a18" /><circle cx="577.5" cy="394.5" r="1.5" fill="#2a1a18" /><circle cx="590.0" cy="394.5" r="1.5" fill="#2a1a18" /><circle cx="602.5" cy="394.5" r="1.5" fill="#2a1a18" /><circle cx="615.0" cy="394.5" r="1.5" fill="#2a1a18" /><circle cx="627.5" cy="394.5" r="1.5" fill="#2a1a18" /><circle cx="640.0" cy="394.5" r="1.5" fill="#2a1a18" /><circle cx="572" cy="402.5" r="1.5" fill="#2a1a18" /><circle cx="584.5" cy="402.5" r="1.5" fill="#2a1a18" /><circle cx="597.0" cy="402.5" r="1.5" fill="#2a1a18" /><circle cx="609.5" cy="402.5" r="1.5" fill="#2a1a18" /><circle cx="622.0" cy="402.5" r="1.5" fill="#2a1a18" /><line x1="536" y1="391" x2="560" y2="396" stroke="#6a564e" stroke-width="2.2" /><line x1="531" y1="398.5" x2="560" y2="400" stroke="#6a564e" stroke-width="2.2" /><line x1="537" y1="407" x2="556" y2="399" stroke="#6a564e" stroke-width="2.2" /><path d="M566 408.3 H642.5 Q645.5 408.3 646.5 411 L658.9 439.8 H548.9 L562 411 Q563 408.3 566 408.3Z" fill="#654440" /><rect x="569" y="419" width="15.40" height="20.80" fill="#6e4c47" /><rect x="620.7" y="419" width="15.40" height="20.80" fill="#6e4c47" /><rect x="585" y="425.7" width="35.00" height="2.00" fill="#3a2624" /><rect x="585" y="431" width="35.00" height="2.00" fill="#3a2624" /><polygon points="530.9,313 593.5,313 593.5,377.5 530.9,371" fill="#615553" /><path d="M467.8 293 L593.5 292.8 L593.5 315 L530.9 315 Q495 310 467.8 293Z" fill="#5e5250" /><path d="M467.8 293 Q495 310 530.9 315" fill="none" stroke="#3a2e2e" stroke-width="1.6"/><rect x="540.8" y="312" width="41.20" height="1.60" fill="#6a4a44" /><path d="M545.1 335.8 V322.9 A6.75 6.75 0 0 1 558.6 322.9 V335.8Z" fill="#fff" /><path d="M563.5 335.8 V322.9 A6.75 6.75 0 0 1 577 322.9 V335.8Z" fill="#fff" /><rect x="524.5" y="336.8" width="6.50" height="0.80" fill="#9a9090" /><rect x="524.5" y="348" width="6.50" height="0.80" fill="#9a9090" /><rect x="524.5" y="358.8" width="6.50" height="0.80" fill="#9a9090" /><rect x="524.5" y="370" width="6.50" height="0.80" fill="#9a9090" /><rect x="524.5" y="336.8" width="0.80" height="34.20" fill="#9a9090" /><rect x="593" y="296.1" width="76.50" height="52.90" fill="#5c4e4b" /><rect x="668.6" y="301" width="377.40" height="48.00" fill="#5b4d4a" /><rect x="597.5" y="296.5" width="0.80" height="48.50" fill="#655653" /><rect x="593" y="345.6" width="419.00" height="3.20" fill="#6a443e" /><polygon points="593,348.6 692.8,348.6 658.2,393.1 593,385.7" fill="#72554e" /><polyline points="647.5,398.5 659.4,398.5 695.2,359 766,359" fill="none" stroke="#6a5e58" stroke-width="3"/><rect x="766" y="349.7" width="159.00" height="16.80" fill="#6f6361" /><rect x="724.9" y="354" width="17.10" height="8.20" fill="#776a68" /><rect x="934" y="349.7" width="28.00" height="17.30" fill="#4a2e28" /><rect x="924.6" y="349.7" width="9.40" height="30.30" fill="#7d706e" /><rect x="905" y="366" width="7.00" height="32.00" fill="#7d706e" /><rect x="668.6" y="301" width="376.40" height="4.00" fill="#544643" /><line x1="669" y1="341.5" x2="717" y2="341.5" stroke="#514441" stroke-width="1.8" /><line x1="712" y1="341" x2="717" y2="333" stroke="#514441" stroke-width="1.3" /><rect x="766" y="349.5" width="9.00" height="17.50" fill="#3f3535" /><rect x="769.5" y="349.5" width="1.50" height="17.50" fill="#5a4e4c" /><line x1="795" y1="345" x2="835" y2="305" stroke="#685a56" stroke-width="0.9" /><line x1="802" y1="345" x2="842" y2="305" stroke="#685a56" stroke-width="0.9" /><line x1="810" y1="345" x2="848" y2="307" stroke="#685a56" stroke-width="0.9" /><line x1="900" y1="345" x2="865" y2="306" stroke="#685a56" stroke-width="0.9" /><line x1="907" y1="345" x2="872" y2="306" stroke="#685a56" stroke-width="0.9" /><rect x="940.5" y="301" width="1.00" height="44.00" fill="#4a3c3a" /><rect x="846.5" y="304" width="0.90" height="41.00" fill="#665854" /><rect x="866.5" y="304" width="0.90" height="41.00" fill="#665854" /><rect x="883" y="304" width="0.90" height="41.00" fill="#665854" /><rect x="1000.5" y="304" width="0.90" height="41.00" fill="#665854" /><rect x="1032" y="304" width="0.90" height="41.00" fill="#665854" /><rect x="790.2" y="289.8" width="118.30" height="13.70" fill="#4b3e3b" /><rect x="840.2" y="286.8" width="24.70" height="3.50" fill="#4b3e3b" /><rect x="851.4" y="282.6" width="3.40" height="4.40" fill="#4b3e3b" /><ellipse cx="973.2" cy="296.5" rx="16.5" ry="6.2" fill="#4a3d3a"/><rect x="708.4" y="296.3" width="28.60" height="5.20" fill="#4a3c2e" /><path d="M719.1 287.3 V275 L722.7 272.1 L726.3 275 V287.3Z" fill="#4a3a36" /><path d="M720 290 L722.7 288 L725.4 290 L722.7 292Z" fill="#2a2020" /><rect x="721.7" y="291" width="2.00" height="5.50" fill="#3a2e2e" /><rect x="1033" y="286.4" width="24.00" height="15.10" fill="#4f4230" /><rect x="1031.9" y="285.5" width="27.00" height="2.10" fill="#5e5040" /><polygon points="1045,301.2 1074.5,303.6 1076.2,313.5 1088.5,343.9 1072.9,366.8 1045,366.8" fill="#6f6462" /><rect x="661" y="310.8" width="414.00" height="1.30" fill="#8f7242" /><rect x="690.5" y="309.2" width="2.20" height="5.00" fill="#a88a4a" /><rect x="765" y="309.2" width="2.20" height="5.00" fill="#a88a4a" /><rect x="840" y="309.2" width="2.20" height="5.00" fill="#a88a4a" /><rect x="907.5" y="309.2" width="2.20" height="5.00" fill="#a88a4a" /><rect x="962.5" y="309.2" width="2.20" height="5.00" fill="#a88a4a" /><rect x="1012.5" y="309.2" width="2.20" height="5.00" fill="#a88a4a" /><rect x="1062.5" y="309.2" width="2.20" height="5.00" fill="#a88a4a" /><path d="M1070.5 296.3 Q1073 293 1073.5 287 Q1075 282.5 1078 282.5 Q1081 282.5 1082 287 Q1082.5 293 1085 296.3Z" fill="#b8903a" /><line x1="1065" y1="303" x2="1071" y2="283" stroke="#2a2a2a" stroke-width="1.1" /><line x1="1071" y1="283" x2="1076" y2="282.5" stroke="#2a2a2a" stroke-width="1.1" /><line x1="1076" y1="283" x2="1072" y2="300" stroke="#1a1a1a" stroke-width="1.5" /><rect x="1074.5" y="298.7" width="3.30" height="10.70" fill="#1a1a1a" /><polygon points="1075,312.7 1119.7,312.3 1103.2,319.2 1103.2,327.4 1078,327.4" fill="#6e5450" /><path d="M1084.4 338 Q1087 333.2 1093 333.2 H1104.9 V343.9 H1093 Q1087 343.9 1084.4 338Z" fill="#6a5c4e" /><path d="M1082 333 Q1092 331.5 1097 334.5 L1085 337Z" fill="#d0c8c0" /><rect x="995" y="348" width="15.00" height="19.50" fill="#2d2323" /><path d="M1008.9 336.5 H1043.3 V366 L1026 371.8 L1008.9 366Z" fill="#3e2e2e" /><polygon points="1014.6,332.4 1041,332.4 1106,400 1090,400 1035,337 1017,336.5 1002,350.5 985,350.5 985,346.5 1000,346.5" fill="#6c463f" /><circle cx="703.1" cy="410.7" r="35" fill="#a39593" /><circle cx="703.1" cy="410.7" r="30.5" fill="#8f8280" /><circle cx="703.1" cy="410.7" r="28.5" fill="#3a2929" /><circle cx="703.1" cy="410.7" r="9.5" fill="#7d6d6b" /><circle cx="783.2" cy="410.7" r="35" fill="#a39593" /><circle cx="783.2" cy="410.7" r="30.5" fill="#8f8280" /><circle cx="783.2" cy="410.7" r="28.5" fill="#6a4535" /><circle cx="770.7" cy="397.7" r="4.6" fill="#2e2020" /><circle cx="796.7" cy="397.7" r="4.6" fill="#2e2020" /><circle cx="765.7" cy="411.7" r="4.6" fill="#2e2020" /><circle cx="800.2" cy="411.7" r="4.6" fill="#2e2020" /><circle cx="780.2" cy="424.7" r="4.6" fill="#2e2020" /><circle cx="783.2" cy="410.7" r="9.5" fill="#8a7a78" /><circle cx="864.7" cy="410.7" r="35" fill="#a39593" /><circle cx="864.7" cy="410.7" r="30.5" fill="#8f8280" /><circle cx="864.7" cy="410.7" r="28.5" fill="#3a2929" /><circle cx="864.7" cy="410.7" r="9.5" fill="#7a6a68" /><circle cx="945.2" cy="410.7" r="35" fill="#a39593" /><circle cx="945.2" cy="410.7" r="30.5" fill="#8f8280" /><circle cx="945.2" cy="410.7" r="28.5" fill="#3a2929" /><circle cx="945.2" cy="410.7" r="9.5" fill="#7d6d6b" /><polygon points="664,415 670,436 658,436" fill="#654440" /><polygon points="747,415 753,436 741,436" fill="#654440" /><polygon points="828,415 834,436 822,436" fill="#654440" /><polygon points="910,415 916,436 904,436" fill="#654440" /><line x1="700" y1="428.3" x2="1000" y2="427.5" stroke="#8f8280" stroke-width="3" /><line x1="783" y1="425" x2="1000" y2="418" stroke="#8f8280" stroke-width="5" /><line x1="783" y1="407" x2="909" y2="398.5" stroke="#8f8280" stroke-width="6.5" /><path d="M694 426 Q694 418 703 418 Q711 418 711 426 V433 H694Z" fill="#8a7c7a" /><path d="M775 404 Q775 397 783 397 Q791 397 791 404 V430 H775Z" fill="#8a7c7a" /><circle cx="783" cy="428" r="2.5" fill="#6e6260" /><line x1="909" y1="366" x2="909" y2="399" stroke="#7d706e" stroke-width="3.2" /><line x1="931" y1="377" x2="973" y2="369" stroke="#7d706e" stroke-width="3" /><line x1="972.5" y1="369" x2="972.5" y2="432" stroke="#7d706e" stroke-width="3" /><rect x="950" y="406" width="26.00" height="22.00" fill="#8f8280" /><rect x="952" y="410" width="24.00" height="2.00" fill="#a89c9a" /><rect x="952" y="420" width="24.00" height="2.00" fill="#a89c9a" /><rect x="973.9" y="373.6" width="24.10" height="8.90" fill="#9d9290" /><rect x="976" y="374.5" width="22.00" height="2.00" fill="#c4bcba" /><rect x="973.9" y="408" width="24.10" height="19.30" fill="#9d9290" /><rect x="978" y="411" width="20.00" height="2.50" fill="#c4bcba" /><rect x="978" y="417" width="20.00" height="2.50" fill="#c4bcba" /><rect x="978" y="423" width="20.00" height="2.00" fill="#c4bcba" /><circle cx="1074.7" cy="427.9" r="17.1" fill="#9e9290" /><circle cx="1074.7" cy="427.9" r="13" fill="#8a7c7a" /><circle cx="1074.7" cy="427.9" r="7" fill="#a39593" /><rect x="1003" y="365.5" width="46.00" height="8.50" fill="#3e2e2e" /><circle cx="1022" cy="428.5" r="17" fill="#9e9290" /><circle cx="1022" cy="428.5" r="13" fill="#8a7c7a" /><rect x="1051.8" y="366.7" width="14.10" height="68.60" fill="#0c0808" /><path d="M997.4 366.9 H1004.5 V434.8 H997.4Z" fill="#8c8280" /><rect x="1048.5" y="366.9" width="6.70" height="69.00" fill="#8c8280" /><path d="M1003.4 367.4 L1026 372.8 L1048.5 367.4 V435.9 H1003.4Z" fill="#553a30" /><polygon points="1009,366 1043,366 1026,372.3" fill="#3e2e2e" /><rect x="1053.2" y="392.3" width="35.80" height="14.10" fill="#5a3a32" /><rect x="1055" y="396" width="30.00" height="2.20" fill="#2e1e1a" /><rect x="1055" y="401" width="30.00" height="2.20" fill="#2e1e1a" /><rect x="1089.4" y="394.3" width="20.20" height="18.10" fill="#6c463f" /><polygon points="1094.2,412 1126.4,438 1094.2,438" fill="#5a3830" /><polyline points="1098,414 1103,432 1128,424" fill="none" stroke="#e0dcd8" stroke-width="2.2"/><rect x="1116.3" y="403" width="5.40" height="16.80" fill="#9a6a18" /><rect x="1109.6" y="407" width="20.20" height="8.10" fill="#9a6a18" /><polyline points="1095,385 1108,392 1115,382" fill="none" stroke="#222" stroke-width="0.8"/><polyline points="1095,385 1100,394 1112,395" fill="none" stroke="#222" stroke-width="0.8"/></svg>
<div class="t" style="left:20.00px;top:5.11px;font-size:10.5px;color:#000;font-weight:normal;transform:scaleX(0.9804)">*Samson the super locomotive.svg - Inkscape</div>
<div class="t" style="left:7.70px;top:25.86px;font-size:10.8px;color:#e8e8e8;font-weight:normal;transform:scaleX(0.8682)">File</div>
<div class="t" style="left:36.90px;top:25.86px;font-size:10.8px;color:#e8e8e8;font-weight:normal;transform:scaleX(0.9030)">Edit</div>
<div class="t" style="left:68.00px;top:25.86px;font-size:10.8px;color:#e8e8e8;font-weight:normal;transform:scaleX(0.9227)">View</div>
<div class="t" style="left:104.00px;top:25.86px;font-size:10.8px;color:#e8e8e8;font-weight:normal;transform:scaleX(0.8755)">Layer</div>
<div class="t" style="left:142.60px;top:25.86px;font-size:10.8px;color:#e8e8e8;font-weight:normal;transform:scaleX(0.9678)">Object</div>
<div class="t" style="left:187.00px;top:25.86px;font-size:10.8px;color:#e8e8e8;font-weight:normal;transform:scaleX(0.8556)">Path</div>
<div class="t" style="left:221.00px;top:25.86px;font-size:10.8px;color:#e8e8e8;font-weight:normal;transform:scaleX(0.9090)">Text</div>
<div class="t" style="left:253.00px;top:25.86px;font-size:10.8px;color:#e8e8e8;font-weight:normal;transform:scaleX(0.9002)">Filters</div>
<div class="t" style="left:294.00px;top:25.86px;font-size:10.8px;color:#e8e8e8;font-weight:normal;transform:scaleX(0.8986)">Extensions</div>
<div class="t" style="left:357.00px;top:25.86px;font-size:10.8px;color:#e8e8e8;font-weight:normal;transform:scaleX(0.9459)">Help</div>
<div class="t" style="left:70.50px;top:81.22px;font-size:8.6px;color:#b4b4b4;font-weight:normal;transform:scaleX(0.8655)">475</div>
<div class="t" style="left:134.95px;top:81.22px;font-size:8.6px;color:#b4b4b4;font-weight:normal;transform:scaleX(0.8655)">500</div>
<div class="t" style="left:199.40px;top:81.22px;font-size:8.6px;color:#b4b4b4;font-weight:normal;transform:scaleX(0.8655)">525</div>
<div class="t" style="left:263.85px;top:81.22px;font-size:8.6px;color:#b4b4b4;font-weight:normal;transform:scaleX(0.8655)">550</div>
<div class="t" style="left:328.30px;top:81.22px;font-size:8.6px;color:#b4b4b4;font-weight:normal;transform:scaleX(0.8655)">575</div>
<div class="t" style="left:392.75px;top:81.22px;font-size:8.6px;color:#b4b4b4;font-weight:normal;transform:scaleX(0.8655)">600</div>
<div class="t" style="left:457.20px;top:81.22px;font-size:8.6px;color:#b4b4b4;font-weight:normal;transform:scaleX(0.8655)">625</div>
<div class="t" style="left:521.65px;top:81.22px;font-size:8.6px;color:#b4b4b4;font-weight:normal;transform:scaleX(0.8655)">650</div>
<div class="t" style="left:586.10px;top:81.22px;font-size:8.6px;color:#b4b4b4;font-weight:normal;transform:scaleX(0.8655)">675</div>
<div class="t" style="left:650.55px;top:81.22px;font-size:8.6px;color:#b4b4b4;font-weight:normal;transform:scaleX(0.8655)">700</div>
<div class="t" style="left:715.00px;top:81.22px;font-size:8.6px;color:#b4b4b4;font-weight:normal;transform:scaleX(0.8655)">725</div>
<div class="t" style="left:779.45px;top:81.22px;font-size:8.6px;color:#b4b4b4;font-weight:normal;transform:scaleX(0.8655)">750</div>
<div class="t" style="left:843.90px;top:81.22px;font-size:8.6px;color:#b4b4b4;font-weight:normal;transform:scaleX(0.8655)">775</div>
<div class="t" style="left:908.35px;top:81.22px;font-size:8.6px;color:#b4b4b4;font-weight:normal;transform:scaleX(0.8655)">800</div>
<div class="t" style="left:972.80px;top:81.22px;font-size:8.6px;color:#b4b4b4;font-weight:normal;transform:scaleX(0.8655)">825</div>
<div class="t" style="left:1037.25px;top:81.22px;font-size:8.6px;color:#b4b4b4;font-weight:normal;transform:scaleX(0.8655)">850</div>
<div class="t" style="left:1101.70px;top:81.22px;font-size:8.6px;color:#b4b4b4;font-weight:normal;transform:scaleX(0.8655)">875</div>
<div class="t" style="left:430.00px;top:55.11px;font-size:10.5px;color:#9a9a9a;font-weight:normal;transform:scaleX(0.9441)">X:</div>
<div class="t" style="left:447.60px;top:55.11px;font-size:10.5px;color:#9e9e9e;font-weight:normal;transform:scaleX(0.8973)">467.884</div>
<div class="t" style="left:544.30px;top:55.11px;font-size:10.5px;color:#9a9a9a;font-weight:normal;transform:scaleX(1.0090)">Y:</div>
<div class="t" style="left:561.60px;top:55.11px;font-size:10.5px;color:#9e9e9e;font-weight:normal;transform:scaleX(0.9357)">90.397</div>
<div class="t" style="left:657.70px;top:55.11px;font-size:10.5px;color:#9a9a9a;font-weight:normal;transform:scaleX(0.7252)">W:</div>
<div class="t" style="left:678.60px;top:55.11px;font-size:10.5px;color:#9e9e9e;font-weight:normal;transform:scaleX(0.8973)">419.230</div>
<div class="t" style="left:802.00px;top:55.11px;font-size:10.5px;color:#9a9a9a;font-weight:normal;transform:scaleX(0.8870)">H:</div>
<div class="t" style="left:822.10px;top:55.11px;font-size:10.5px;color:#9e9e9e;font-weight:normal;transform:scaleX(0.8830)">67.953</div>
<div class="t" style="left:920.50px;top:55.11px;font-size:10.5px;color:#e8e8e8;font-weight:normal;transform:scaleX(1.0199)">mm</div>
<div class="t" style="left:1137.50px;top:86.92px;font-size:6px;color:#222;font-weight:bold;transform:scaleX(0.6664)">1:1</div>
<div class="t" style="left:17.50px;top:643.28px;font-size:10.3px;color:#e6e6e6;font-weight:normal;transform:scaleX(0.9767)">Fill:</div>
<div class="t" style="left:2.00px;top:657.98px;font-size:10.3px;color:#e6e6e6;font-weight:normal;transform:scaleX(0.9540)">Stroke:</div>
<div class="t" style="left:59.80px;top:643.28px;font-size:10.3px;color:#e6e6e6;font-weight:normal;transform:scaleX(1.0869)">N/A</div>
<div class="t" style="left:59.80px;top:657.98px;font-size:10.3px;color:#e6e6e6;font-weight:normal;transform:scaleX(1.0869)">N/A</div>
<div class="t" style="left:129.70px;top:650.28px;font-size:10.3px;color:#dcdcdc;font-weight:normal;transform:scaleX(0.9291)">O:</div>
<div class="t" style="left:147.80px;top:650.28px;font-size:10.3px;color:#8a8a8a;font-weight:normal;transform:scaleX(0.8709)">100</div>
<div class="t" style="left:236.00px;top:650.78px;font-size:10.3px;color:#e6e6e6;font-weight:normal;transform:scaleX(0.9341)">#g10931</div>
<div class="t" style="left:352.50px;top:650.78px;font-size:10.3px;color:#e6e6e6;font-weight:normal;transform:scaleX(1.0131)">No objects selected. Click, Shift+click, Alt+scroll mouse on top of objects, or drag around objects to select.</div>
<div class="t" style="left:939.60px;top:643.28px;font-size:10.3px;color:#dcdcdc;font-weight:normal;transform:scaleX(0.9472)">X:</div>
<div class="t" style="left:939.60px;top:657.78px;font-size:10.3px;color:#dcdcdc;font-weight:normal;transform:scaleX(0.8916)">Y:</div>
<div class="t" style="left:959.80px;top:643.28px;font-size:10.3px;color:#dcdcdc;font-weight:normal;transform:scaleX(0.8971)">546.82</div>
<div class="t" style="left:964.80px;top:657.78px;font-size:10.3px;color:#dcdcdc;font-weight:normal;transform:scaleX(0.9024)">73.38</div>
<div class="t" style="left:995.70px;top:650.28px;font-size:10.3px;color:#dcdcdc;font-weight:normal;transform:scaleX(1.0012)">Z:</div>
<div class="t" style="left:1015.00px;top:650.78px;font-size:10.3px;color:#e6e6e6;font-weight:normal;transform:scaleX(0.9436)">78%</div>
<div class="t" style="left:1090.00px;top:650.28px;font-size:10.3px;color:#dcdcdc;font-weight:normal;transform:scaleX(0.9008)">R:</div>
<div class="t" style="left:1109.00px;top:650.78px;font-size:10.3px;color:#e6e6e6;font-weight:normal;transform:scaleX(1.0524)">0.00°</div>
</body></html>
